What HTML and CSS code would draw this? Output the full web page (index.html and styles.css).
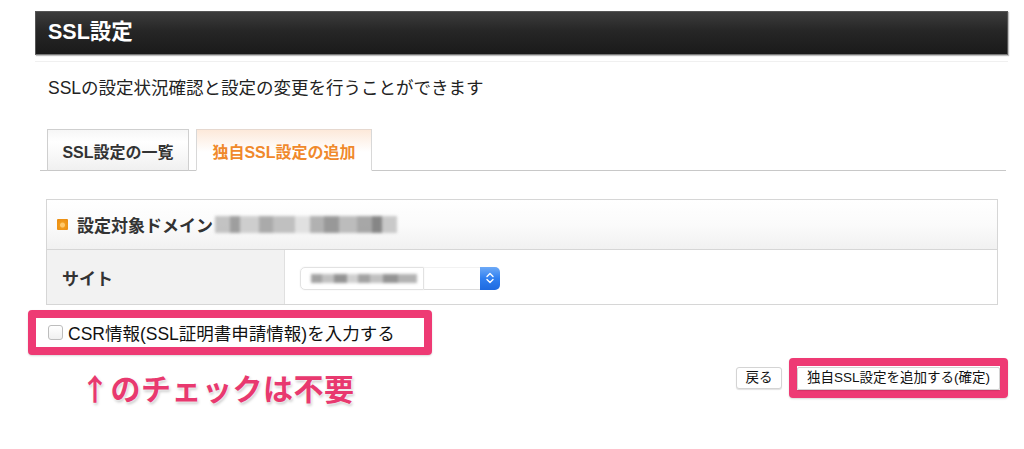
FILE: index.html
```html
<!DOCTYPE html>
<html lang="ja">
<head>
<meta charset="utf-8">
<title>SSL設定</title>
<link rel="stylesheet" href="styles.css">
</head>
<body>
<div class="page">
  <div class="header"><h1 class="header-title">SSL設定</h1></div>
  <div class="header-line"></div>
  <p class="desc">SSLの設定状況確認と設定の変更を行うことができます</p>

  <div class="tabs">
    <div class="tab">SSL設定の一覧</div>
    <div class="tab tab-active">独自SSL設定の追加</div>
  </div>

  <div class="table">
    <div class="row row-head">
      <span class="bullet"></span>
      <span class="head-label">設定対象ドメイン</span>
      <span class="blur blur-domain"></span>
    </div>
    <div class="row row-site">
      <div class="cell-label">サイト</div>
      <div class="cell-value">
        <div class="select">
          <span class="select-text"><span class="blur blur-site"></span></span>
          <span class="select-blank"></span>
          <span class="select-btn">
            <svg width="10" height="14" viewBox="0 0 10 14"><path d="M2 5.5 L5 2.5 L8 5.5" fill="none" stroke="#fff" stroke-width="1.4" stroke-linecap="round" stroke-linejoin="round"/><path d="M2 8.5 L5 11.5 L8 8.5" fill="none" stroke="#fff" stroke-width="1.4" stroke-linecap="round" stroke-linejoin="round"/></svg>
          </span>
        </div>
      </div>
    </div>
  </div>

  <div class="hl hl-check">
    <label class="check"><span class="checkbox"></span>CSR情報(SSL証明書申請情報)を入力する</label>
  </div>

  <div class="bottom">
    <div class="note">↑のチェックは不要</div>
    <div class="actions">
      <button class="btn btn-back">戻る</button>
      <div class="hl hl-btn"><button class="btn btn-submit">独自SSL設定を追加する(確定)</button></div>
    </div>
  </div>
</div>
</body>
</html>
```

FILE: styles.css
```css
* { box-sizing: border-box; }
html, body { margin: 0; padding: 0; background: #fff; }
body {
  font-family: "Liberation Sans", "Noto Sans CJK JP", sans-serif;
  color: #222;
  width: 1024px;
  height: 449px;
  overflow: hidden;
}
.page {
  padding: 11px 16px 0 35px;
}
.header {
  height: 44px;
  background: linear-gradient(#3c3c3c, #262626 45%, #1a1a1a);
  border: 1px solid #555;
  border-bottom-color: #777;
  display: flex;
  align-items: center;
  padding-left: 12px;
  box-shadow: 1px 1px 1px rgba(0,0,0,0.25);
}
.header-title {
  margin: 0;
  color: #fff;
  font-size: 21.5px;
  font-weight: bold;
  line-height: 1;
}
.header-line {
  height: 1px;
  background: #f0f0f0;
  margin-top: 6px;
}
.desc {
  margin: 15px 0 0 13px;
  font-size: 17.5px;
  line-height: 22px;
  color: #222;
}
.tabs {
  margin: 30px 2px 0 5px;
  padding-left: 7px;
  display: flex;
  gap: 7px;
  border-bottom: 1px solid #c8c8c8;
  height: 42px;
  align-items: flex-end;
}
.tab {
  height: 42px;
  margin-bottom: -1px;
  width: 142px;
  border: 1px solid #cfcfcf;
  border-bottom-color: #c8c8c8;
  background: linear-gradient(#f6f6f6, #ffffff 30%, #f0f0f0);
  display: flex;
  align-items: center;
  justify-content: center;
  font-size: 16px;
  font-weight: bold;
  color: #333;
  padding-top: 2px;
}
.tab-active {
  width: 176px;
  color: #f0892c;
  background: linear-gradient(#fde9da, #fff 55%);
  border-color: #e6d8cf #d8d8d8 #fff #d8d8d8;
}
.table {
  margin: 28px 10px 0 11px;
  border: 1px solid #d6d6d6;
}
.row { display: flex; }
.row-head {
  height: 50px;
  align-items: center;
  padding-left: 10px;
  background: linear-gradient(#ffffff, #fbfbfb 50%, #f1f1f1);
  border-bottom: 1px solid #d6d6d6;
}
.bullet {
  width: 11px;
  height: 11px;
  background: radial-gradient(circle at 50% 55%, #ffc86a 0 2px, #f19a1a 3px, #e98a10);
  border-radius: 1px;
  margin-right: 9px;
}
.head-label {
  font-size: 17px;
  font-weight: bold;
  color: #333;
}
.blur {
  display: inline-block;
  filter: blur(1.6px);
  opacity: 0.9;
}
.blur-domain {
  width: 182px;
  height: 17px;
  margin-left: 2px;
  background:
    linear-gradient(90deg, #bdbdbd 0 8%, #959595 8% 14%, #cacaca 14% 24%, #a2a2a2 24% 32%, #bababa 32% 44%, #dedede 44% 52%, #aaa 52% 60%, #8e8e8e 60% 68%, #b6b6b6 68% 78%, #9e9e9e 78% 86%, #7a7a7a 86% 92%, #c4c4c4 92%);
}
.row-site { height: 54px; }
.cell-label {
  width: 238px;
  background: #f2f2f2;
  border-right: 1px solid #e0e0e0;
  display: flex;
  align-items: center;
  padding-left: 15px;
  font-size: 17px;
  font-weight: bold;
  color: #333;
}
.cell-value {
  flex: 1;
  display: flex;
  align-items: center;
  padding-left: 15px;
  padding-top: 2px;
}
.select {
  display: flex;
  width: 200px;
  height: 23px;
  align-items: stretch;
}
.select-text {
  width: 124px;
  border: 1px solid #e2e2e2;
  border-radius: 5px 0 0 5px;
  display: flex;
  align-items: center;
  padding-left: 10px;
  box-shadow: 0 0 2px #eee;
}
.blur-site {
  width: 106px;
  height: 9px;
  filter: blur(1.5px);
  background:
    linear-gradient(90deg, #999 0 10%, #bbb 10% 22%, #888 22% 34%, #ccc 34% 44%, #999 44% 56%, #bbb 56% 68%, #888 68% 82%, #aaa 82%);
}
.select-blank {
  flex: 1;
  border-bottom: 1px solid #dcdcdc;
  border-top: 1px solid #f2f2f2;
}
.select-btn {
  width: 20px;
  background: linear-gradient(#6eaaf7, #2f7ff0 50%, #1e6ae0);
  border-radius: 0 5px 5px 0;
  display: flex;
  align-items: center;
  justify-content: center;
}
.hl {
  border: 8px solid #ee3a74;
  border-radius: 4px;
  background: #fff;
  box-shadow: 0 1px 2px rgba(0,0,0,0.15);
}
.hl-check {
  margin: 5px 0 0 -7px;
  width: 404px;
  height: 45px;
  display: flex;
  align-items: center;
  padding-left: 12px;
}
.check {
  display: flex;
  align-items: center;
  font-size: 17.5px;
  color: #111;
  white-space: nowrap;
}
.checkbox {
  width: 15px;
  height: 15px;
  border: 1px solid #bdbdbd;
  border-radius: 3px;
  background: linear-gradient(#fff, #f0f0f0);
  margin-right: 5px;
}
.bottom {
  display: flex;
  justify-content: space-between;
  align-items: flex-start;
  margin-top: 3px;
}
.note {
  margin: 12px 0 0 45px;
  font-family: "Noto Sans CJK JP", sans-serif;
  font-size: 30px;
  font-weight: bold;
  color: #e8396f;
  line-height: 34px;
  text-shadow: 0 0 2px #fff, 0 0 3px #fff, 1px 2px 3px rgba(0,0,0,0.25);
  letter-spacing: 0.5px;
}
.actions {
  display: flex;
  align-items: center;
  gap: 7px;
}
.btn {
  font-family: "Liberation Sans", "Noto Sans CJK JP", sans-serif;
  font-size: 13.5px;
  color: #111;
  background: #fff;
  border: 1px solid #d4d4d4;
  border-radius: 3px;
  height: 22px;
  padding: 0 8px;
  line-height: 20px;
  box-shadow: 0 1px 1px rgba(0,0,0,0.12);
}
.btn-back { width: 46px; padding: 0; }
.hl-btn {
  height: 40px;
  width: 219px;
  display: flex;
  align-items: center;
}
.btn-submit {
  width: 100%;
  height: 23px;
  border-radius: 2px;
  padding: 0;
}
```
